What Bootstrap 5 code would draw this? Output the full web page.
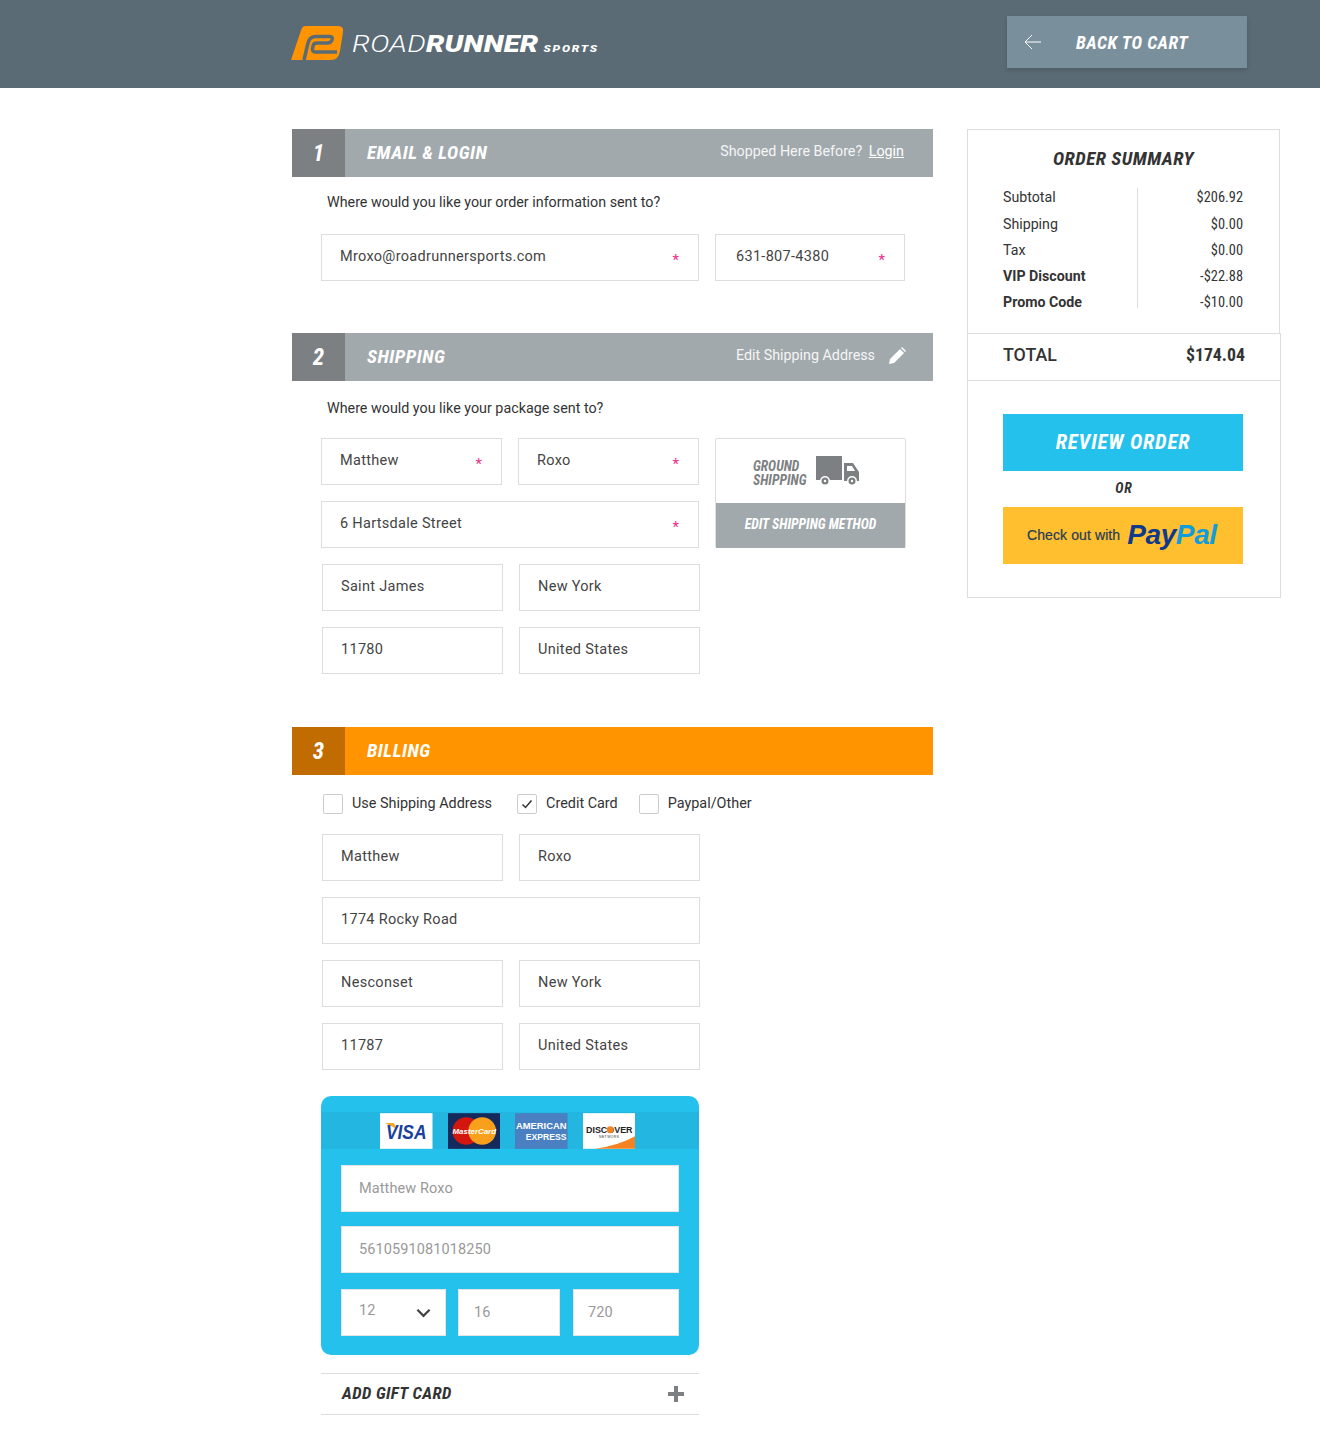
<!DOCTYPE html>
<html lang="en">
<head>
<meta charset="UTF-8">
<title>Road Runner Sports Checkout</title>
<link href="https://cdn.jsdelivr.net/npm/bootstrap@5.3.3/dist/css/bootstrap.min.css" rel="stylesheet">
<style>
body { font-family: Roboto, "Liberation Sans", sans-serif; color: #333; background: #fff; margin: 0; }
.cond { font-family: "Roboto Condensed", "Liberation Sans Narrow", Roboto, sans-serif; font-style: italic; font-weight: 700; }

.top-bar { height: 88px; background: #5a6b75; padding-left: 291px; padding-right: 73px; }
.brand-text { font-family: Roboto, sans-serif; font-style: italic; color: #fff; font-size: 23px; letter-spacing: .2px; margin-left: 8px; white-space: nowrap; transform: scaleX(1.265); transform-origin: left center; padding-top: 2px; }
.brand-text .thin { font-weight: 300; }
.brand-text .thick { font-weight: 900; }
.brand-text .sports { font-weight: 900; font-size: 9.5px; letter-spacing: 1.4px; margin-left: 4px; }
.back-btn { width: 240px; height: 52px; margin-bottom: 4px; background: #7a8f9c; color: #fff; font-size: 18px; letter-spacing: .5px; box-shadow: 0 2px 4px rgba(0,0,0,.15); padding-left: 16px; border-radius: 0; }
.back-btn span { margin-left: 34px; }

.page-wrap { padding: 41px 39px 0 292px; gap: 34px; }
.main-col { width: 641px; flex: none; }
.side-col { width: 314px; flex: none; }

.step-head { height: 48px; background: #a2a9ad; color: #fff; }
.step-head.orange { background: #ff9400; }
.step-num { width: 53px; height: 48px; background: #7d8082; font-size: 23px; padding-top: 2px; }
.orange .step-num { background: #c06c00; }
.step-title { font-size: 19px; letter-spacing: .5px; margin-left: 22px; }
.step-note { margin-left: auto; padding-right: 29px; padding-bottom: 2px; font-size: 14.3px; color: #f4f5f5; }
.step-note a { color: #fff; margin-left: 3px; }
.step-note svg { margin-left: 13px; }
.ask { font-size: 14.3px; line-height: 18px; color: #333; margin-left: 35px; }

.form-area { width: 378px; margin-left: 29px; }
.field-row { gap: 16px; margin-bottom: 16px; }
.field { position: relative; flex: 1 1 0; min-width: 0; }
.field .form-control, .pay-panel .form-control, .pay-panel .form-select { height: 47px; border: 1px solid #ddd; border-radius: 0; font-size: 14.5px; letter-spacing: .3px; color: #444; padding: 0 18px 2px; box-shadow: none; }
.phone-field .form-control { padding-left: 20px; }
.req { position: absolute; right: 20px; top: 16px; color: #ee2c8f; font-size: 15px; line-height: 20px; }

.ship-method { width: 191px; height: 110px; margin-left: 16px; flex: none; border: 1px solid #ddd; border-radius: 2px; }
.ship-top { height: 64px; gap: 9px; color: #7d8082; font-size: 13.7px; line-height: 14px; padding-left: 37px; }
.ship-top .cond { padding-top: 3px; }
.ship-edit { height: 45px; background: #a2a9ad; color: #fff; font-size: 13.7px; padding-bottom: 2px; }

.check-row { margin: 18px 0 19px 31px; height: 22px; font-size: 14.4px; color: #333; }
.check-row .form-check-input { width: 20px; height: 20px; margin: 0 9px 0 0; border: 1px solid #ccc; border-radius: 2px; box-shadow: none; }
.check-row .form-check-input:checked { background-color: #fff; border-color: #ccc; background-size: 12px; background-image: url("data:image/svg+xml,%3csvg xmlns='http://www.w3.org/2000/svg' viewBox='0 0 12 12'%3e%3cpath fill='none' stroke='%23333' stroke-width='1.5' d='M1.5 6.5l3 3 6-7'/%3e%3c/svg%3e"); }

.pay-panel { width: 378px; margin: 26px 0 0 29px; height: 259px; background: #24c1ec; border-radius: 10px; padding-top: 16px; }
.card-strip { height: 37px; background: #22b6e0; padding-left: 59px; gap: 15px; }
.card-tile { width: 52.5px; height: 36px; margin-top: 1px; flex: none; display: block; }
.pay-fields { padding: 16px 20px 0; }
.pay-panel .form-control, .pay-panel .form-select { color: #999; border-color: #e5e5e5; padding: 0 17px 1px; letter-spacing: .1px; }
.pay-panel .form-select { padding-bottom: 3px; background-image: url("data:image/svg+xml,%3csvg xmlns='http://www.w3.org/2000/svg' viewBox='0 0 16 10'%3e%3cpath fill='none' stroke='%23444' stroke-width='2.4' d='M1.5 1.5L8 8l6.500-6.500'/%3e%3c/svg%3e"); background-size: 15px 10px; background-position: right 14px center; }
.pay-panel .short-field { flex: none; padding: 0 15px; }
.gift-row { width: 378px; height: 42px; margin: 18px 0 0 29px; border-top: 1px solid #ddd; border-bottom: 1px solid #ddd; padding: 0 15px 0 21px; font-size: 17px; letter-spacing: .4px; color: #333; }

.sum-top { width: 313px; border: 1px solid #ddd; border-bottom: 0; height: 204px; }
.sum-bottom { border: 1px solid #ddd; border-top: 0; height: 265px; }
.summary-title { font-size: 19px; letter-spacing: .5px; text-align: center; color: #333; padding-top: 15px; height: 58px; }
.sum-lines { margin: 0 36px 0 35px; font-size: 14.2px; }
.sum-labels { width: 135px; border-right: 1px solid #ddd; height: 120px; }
.sum-line { height: 26px; line-height: 26px; }
.sum-line:first-child { margin-top: -4px; height: 27px; }
.sum-vals { flex: 1; text-align: right; padding-top: 1px; font-family: "Roboto Condensed", "Liberation Sans Narrow", Roboto, sans-serif; font-size: 14.4px; }
.total-line { height: 48px; border-top: 1px solid #ddd; border-bottom: 1px solid #ddd; padding: 0 35px 3px; font-size: 17.8px; font-weight: 500; }
.total-line b { font-family: "Roboto Condensed", "Liberation Sans Narrow", Roboto, sans-serif; font-weight: 700; }
.review-btn { display: flex; align-items: center; justify-content: center; width: 240px; height: 57px; margin: 33px 0 0 35px; background: #24c1ec; color: #fff; font-size: 21px; letter-spacing: .8px; border: 0; border-radius: 0; }
.or-text { width: 240px; margin-left: 35px; height: 36px; line-height: 34px; text-align: center; font-size: 14px; letter-spacing: 1px; color: #333; padding-left: 2px; }
.paypal-btn { width: 240px; height: 57px; margin-left: 35px; background: #ffbf2f; border: 0; border-radius: 0; color: #253b59; font-family: "Liberation Sans", sans-serif; font-size: 14px; letter-spacing: .1px; gap: 7px; padding: 0 0 0 24px; -webkit-text-stroke: .2px #253b59; }
.paypal-word { font-family: "Liberation Sans", sans-serif; font-style: italic; font-weight: 700; font-size: 28px; letter-spacing: -.4px; color: #0f3a8c; line-height: 1; padding-bottom: 2px; -webkit-text-stroke: 0; }
.paypal-word i { color: #0f9ddd; }
</style>
</head>
<body>

<header class="top-bar d-flex align-items-center justify-content-between">
    <div class="d-flex align-items-center">
        <svg width="53" height="36" viewBox="0 0 53 36">
            <path fill="#ff9400" d="M10.500 3Q11.500 0 15 0H47Q53 0 52 6L49 25Q47.500 34 40 34H0Z"/>
            <path fill="none" stroke="#5a6b75" stroke-width="3.500" d="M13 34L17 17Q18.500 10.500 25 10.500H39Q42 10.500 41 14Q40 17 36 17H26Q22.500 17 22 20L21.500 23Q21 26 25 26H46"/>
        </svg>
        <div class="brand-text"><span class="thin">ROAD</span><span class="thick">RUNNER</span><span class="sports">SPORTS</span></div>
    </div>
    <a class="btn back-btn cond d-flex align-items-center" href="#">
        <svg width="18" height="16" viewBox="0 0 18 16"><path fill="none" stroke="#fff" stroke-width="1" d="M17 8H1M8 1L1 8l7 7"/></svg>
        <span>BACK TO CART</span>
    </a>
</header>

<div class="page-wrap d-flex align-items-start">
    <div class="main-col">
        <!-- step 1 -->
        <div class="step-head d-flex align-items-center">
            <div class="step-num cond d-flex align-items-center justify-content-center">1</div>
            <div class="step-title cond">EMAIL &amp; LOGIN</div>
            <div class="step-note">Shopped Here Before? <a href="#">Login</a></div>
        </div>
        <div class="ask" style="margin-top:16px">Where would you like your order information sent to?</div>
        <div class="d-flex field-row" style="margin:23px 28px 52px 29px">
            <div class="field" style="flex:none;width:378px"><input class="form-control" value="Mroxo@roadrunnersports.com"><span class="req">*</span></div>
            <div class="field phone-field"><input class="form-control" value="631-807-4380"><span class="req">*</span></div>
        </div>

        <!-- step 2 -->
        <div class="step-head d-flex align-items-center">
            <div class="step-num cond d-flex align-items-center justify-content-center">2</div>
            <div class="step-title cond">SHIPPING</div>
            <div class="step-note d-flex align-items-center" style="padding-right:27px">Edit Shipping Address
                <svg width="18" height="18" viewBox="0 0 18 18"><path fill="#fff" d="M1 17l1-5L12 2l4 4L6 16zM13 1l1-1 4 4-1 1z"/></svg>
            </div>
        </div>
        <div class="ask" style="margin-top:18px">Where would you like your package sent to?</div>
        <div class="d-flex" style="margin:21px 0 0 29px">
            <div class="form-area" style="margin-left:0">
                <div class="d-flex field-row">
                    <div class="field"><input class="form-control" value="Matthew"><span class="req">*</span></div>
                    <div class="field"><input class="form-control" value="Roxo"><span class="req">*</span></div>
                </div>
                <div class="d-flex field-row">
                    <div class="field"><input class="form-control" value="6 Hartsdale Street"><span class="req">*</span></div>
                </div>
            </div>
            <div class="ship-method">
                <div class="ship-top d-flex align-items-center">
                    <div class="cond">GROUND<br>SHIPPING</div>
                    <svg width="44" height="30" viewBox="0 0 44 30">
                        <path fill="#7d8082" d="M0 0H26V24H0zM28 7H37L43 16V25H28zM31 10V15H39L36 10z"/>
                        <circle cx="9" cy="25" r="5" fill="#fff"/><circle cx="9" cy="25" r="3.500" fill="#7d8082"/><circle cx="9" cy="25" r="1.200" fill="#fff"/>
                        <circle cx="36" cy="25" r="5" fill="#fff"/><circle cx="36" cy="25" r="3.500" fill="#7d8082"/><circle cx="36" cy="25" r="1.200" fill="#fff"/>
                    </svg>
                </div>
                <div class="ship-edit cond d-flex align-items-center justify-content-center">EDIT SHIPPING METHOD</div>
            </div>
        </div>
        <div class="form-area" style="margin-left:30px">
            <div class="d-flex field-row">
                <div class="field"><input class="form-control" value="Saint James"></div>
                <div class="field"><input class="form-control" value="New York"></div>
            </div>
            <div class="d-flex field-row" style="margin-bottom:53px">
                <div class="field"><input class="form-control" value="11780"></div>
                <div class="field"><input class="form-control" value="United States"></div>
            </div>
        </div>

        <!-- step 3 -->
        <div class="step-head orange d-flex align-items-center">
            <div class="step-num cond d-flex align-items-center justify-content-center">3</div>
            <div class="step-title cond">BILLING</div>
        </div>
        <div class="check-row d-flex align-items-center">
            <input class="form-check-input" type="checkbox"><span style="margin-right:25px">Use Shipping Address</span>
            <input class="form-check-input" type="checkbox" checked><span style="margin-right:21px">Credit Card</span>
            <input class="form-check-input" type="checkbox"><span>Paypal/Other</span>
        </div>
        <div class="form-area" style="margin-left:30px">
            <div class="d-flex field-row">
                <div class="field"><input class="form-control" value="Matthew"></div>
                <div class="field"><input class="form-control" value="Roxo"></div>
            </div>
            <div class="d-flex field-row">
                <div class="field"><input class="form-control" value="1774 Rocky Road"></div>
            </div>
            <div class="d-flex field-row">
                <div class="field"><input class="form-control" value="Nesconset"></div>
                <div class="field"><input class="form-control" value="New York"></div>
            </div>
            <div class="d-flex field-row" style="margin-bottom:0">
                <div class="field"><input class="form-control" value="11787"></div>
                <div class="field"><input class="form-control" value="United States"></div>
            </div>
        </div>

        <div class="pay-panel">
            <div class="card-strip d-flex">
                <svg class="card-tile" viewBox="0 0 53 36">
                    <rect width="53" height="36" fill="#fff"/>
                    <path fill="#f7a823" d="M5 10h9l3 6z"/>
                    <text x="6" y="26" textLength="41" lengthAdjust="spacingAndGlyphs" font-family="Liberation Sans" font-style="italic" font-weight="700" font-size="20" fill="#1a3f9c">VISA</text>
                </svg>
                <svg class="card-tile" viewBox="0 0 53 36">
                    <rect width="53" height="36" fill="#152a5c"/>
                    <circle cx="18.500" cy="18" r="14" fill="#d3160e"/><circle cx="34.500" cy="18" r="14" fill="#f8a01c"/>
                    <text x="26.500" y="21" text-anchor="middle" font-family="Liberation Sans" font-style="italic" font-weight="700" font-size="8" fill="#fff">MasterCard</text>
                </svg>
                <svg class="card-tile" viewBox="0 0 53 36">
                    <rect width="53" height="36" fill="#4a7fc1"/>
                    <text x="26.500" y="16" text-anchor="middle" font-family="Liberation Sans" font-weight="700" font-size="9.500" fill="#fff">AMERICAN</text>
                    <text x="31.500" y="27" text-anchor="middle" font-family="Liberation Sans" font-weight="700" font-size="8.700" fill="#fff">EXPRESS</text>
                </svg>
                <svg class="card-tile" viewBox="0 0 53 36">
                    <rect width="53" height="36" fill="#fff"/>
                    <path fill="#f58220" d="M12 36Q38 32 53 23V36z"/>
                    <text x="26.500" y="20" text-anchor="middle" font-family="Liberation Sans" font-weight="700" font-size="9" fill="#222">DISCOVER</text>
                    <circle cx="27.500" cy="16.800" r="3.500" fill="#f58220"/>
                    <text x="26.500" y="25" text-anchor="middle" font-family="Liberation Sans" font-size="3.500" letter-spacing=".4" fill="#333">NETWORK</text>
                </svg>
            </div>
            <div class="pay-fields">
                <input class="form-control" value="Matthew Roxo" style="margin-bottom:14px">
                <input class="form-control" value="5610591081018250" style="margin-bottom:16px">
                <div class="d-flex" style="gap:12px">
                    <select class="form-select" style="width:105px;flex:none"><option>12</option></select>
                    <input class="form-control short-field" value="16" style="width:102px">
                    <input class="form-control short-field" value="720" style="width:106px;margin-left:1px;padding:0 14px 1px">
                </div>
            </div>
        </div>

        <div class="gift-row cond d-flex align-items-center justify-content-between">
            <span>ADD GIFT CARD</span>
            <svg width="16" height="16" viewBox="0 0 16 16"><path fill="#7d8082" d="M6 0h4v6h6v4h-6v6H6v-6H0V6h6z"/></svg>
        </div>
    </div>

    <aside class="side-col">
        <div class="sum-top">
            <div class="summary-title cond">ORDER SUMMARY</div>
            <div class="sum-lines d-flex">
                <div class="sum-labels">
                    <div class="sum-line">Subtotal</div>
                    <div class="sum-line">Shipping</div>
                    <div class="sum-line">Tax</div>
                    <div class="sum-line fw-bold">VIP Discount</div>
                    <div class="sum-line fw-bold">Promo Code</div>
                </div>
                <div class="sum-vals">
                    <div class="sum-line">$206.92</div>
                    <div class="sum-line">$0.00</div>
                    <div class="sum-line">$0.00</div>
                    <div class="sum-line">-$22.88</div>
                    <div class="sum-line">-$10.00</div>
                </div>
            </div>
        </div>
        <div class="sum-bottom">
            <div class="total-line d-flex align-items-center justify-content-between"><span>TOTAL</span><b>$174.04</b></div>
            <a class="btn review-btn cond" href="#">REVIEW ORDER</a>
            <div class="or-text cond">OR</div>
            <a class="btn paypal-btn d-flex align-items-center" href="#">Check out with <span class="paypal-word">Pay<i>Pal</i></span></a>
        </div>
    </aside>
</div>

</body>
</html>
